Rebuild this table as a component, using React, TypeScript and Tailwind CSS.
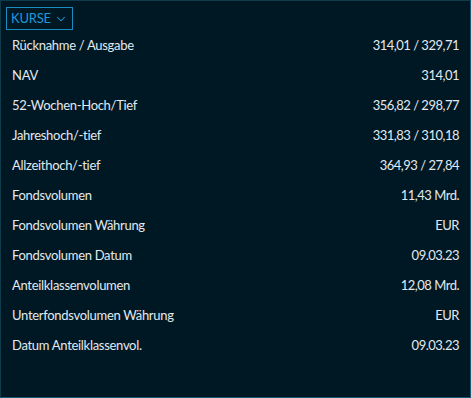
import { ChevronDown } from 'lucide-react'

const rows: [string, string][] = [
  ['Rücknahme / Ausgabe', '314,01 / 329,71'],
  ['NAV', '314,01'],
  ['52-Wochen-Hoch/Tief', '356,82 / 298,77'],
  ['Jahreshoch/-tief', '331,83 / 310,18'],
  ['Allzeithoch/-tief', '364,93 / 27,84'],
  ['Fondsvolumen', '11,43 Mrd.'],
  ['Fondsvolumen Währung', 'EUR'],
  ['Fondsvolumen Datum', '09.03.23'],
  ['Anteilklassenvolumen', '12,08 Mrd.'],
  ['Unterfondsvolumen Währung', 'EUR'],
  ['Datum Anteilklassenvol.', '09.03.23'],
]

export default function App() {
  return (
    <div
      className="w-[471px] h-[398px] bg-[#001824] border border-[#0f3a4a] border-r-[#1a5a70] border-b-[#1a5a70] text-[13px] text-[#e2eaef]"
      style={{ fontFamily: 'Lato, "Liberation Sans", sans-serif' }}
    >
      <div className="px-[5px] pt-[6px]">
        <button className="flex items-center gap-[3px] h-[23px] px-[4px] border border-[#1a8cc0] text-[#1d9ad8] text-[13px] leading-none tracking-[-0.2px]">
          KURSE
          <ChevronDown size={14} strokeWidth={1.8} />
        </button>
      </div>
      <div className="px-[11px] pt-[1px]">
        {rows.map(([label, value]) => (
          <div key={label} className="flex items-center justify-between h-[30px]">
            <span className="tracking-[-0.3px]">{label}</span>
            <span className="tracking-[-0.5px]">{value}</span>
          </div>
        ))}
      </div>
    </div>
  )
}
